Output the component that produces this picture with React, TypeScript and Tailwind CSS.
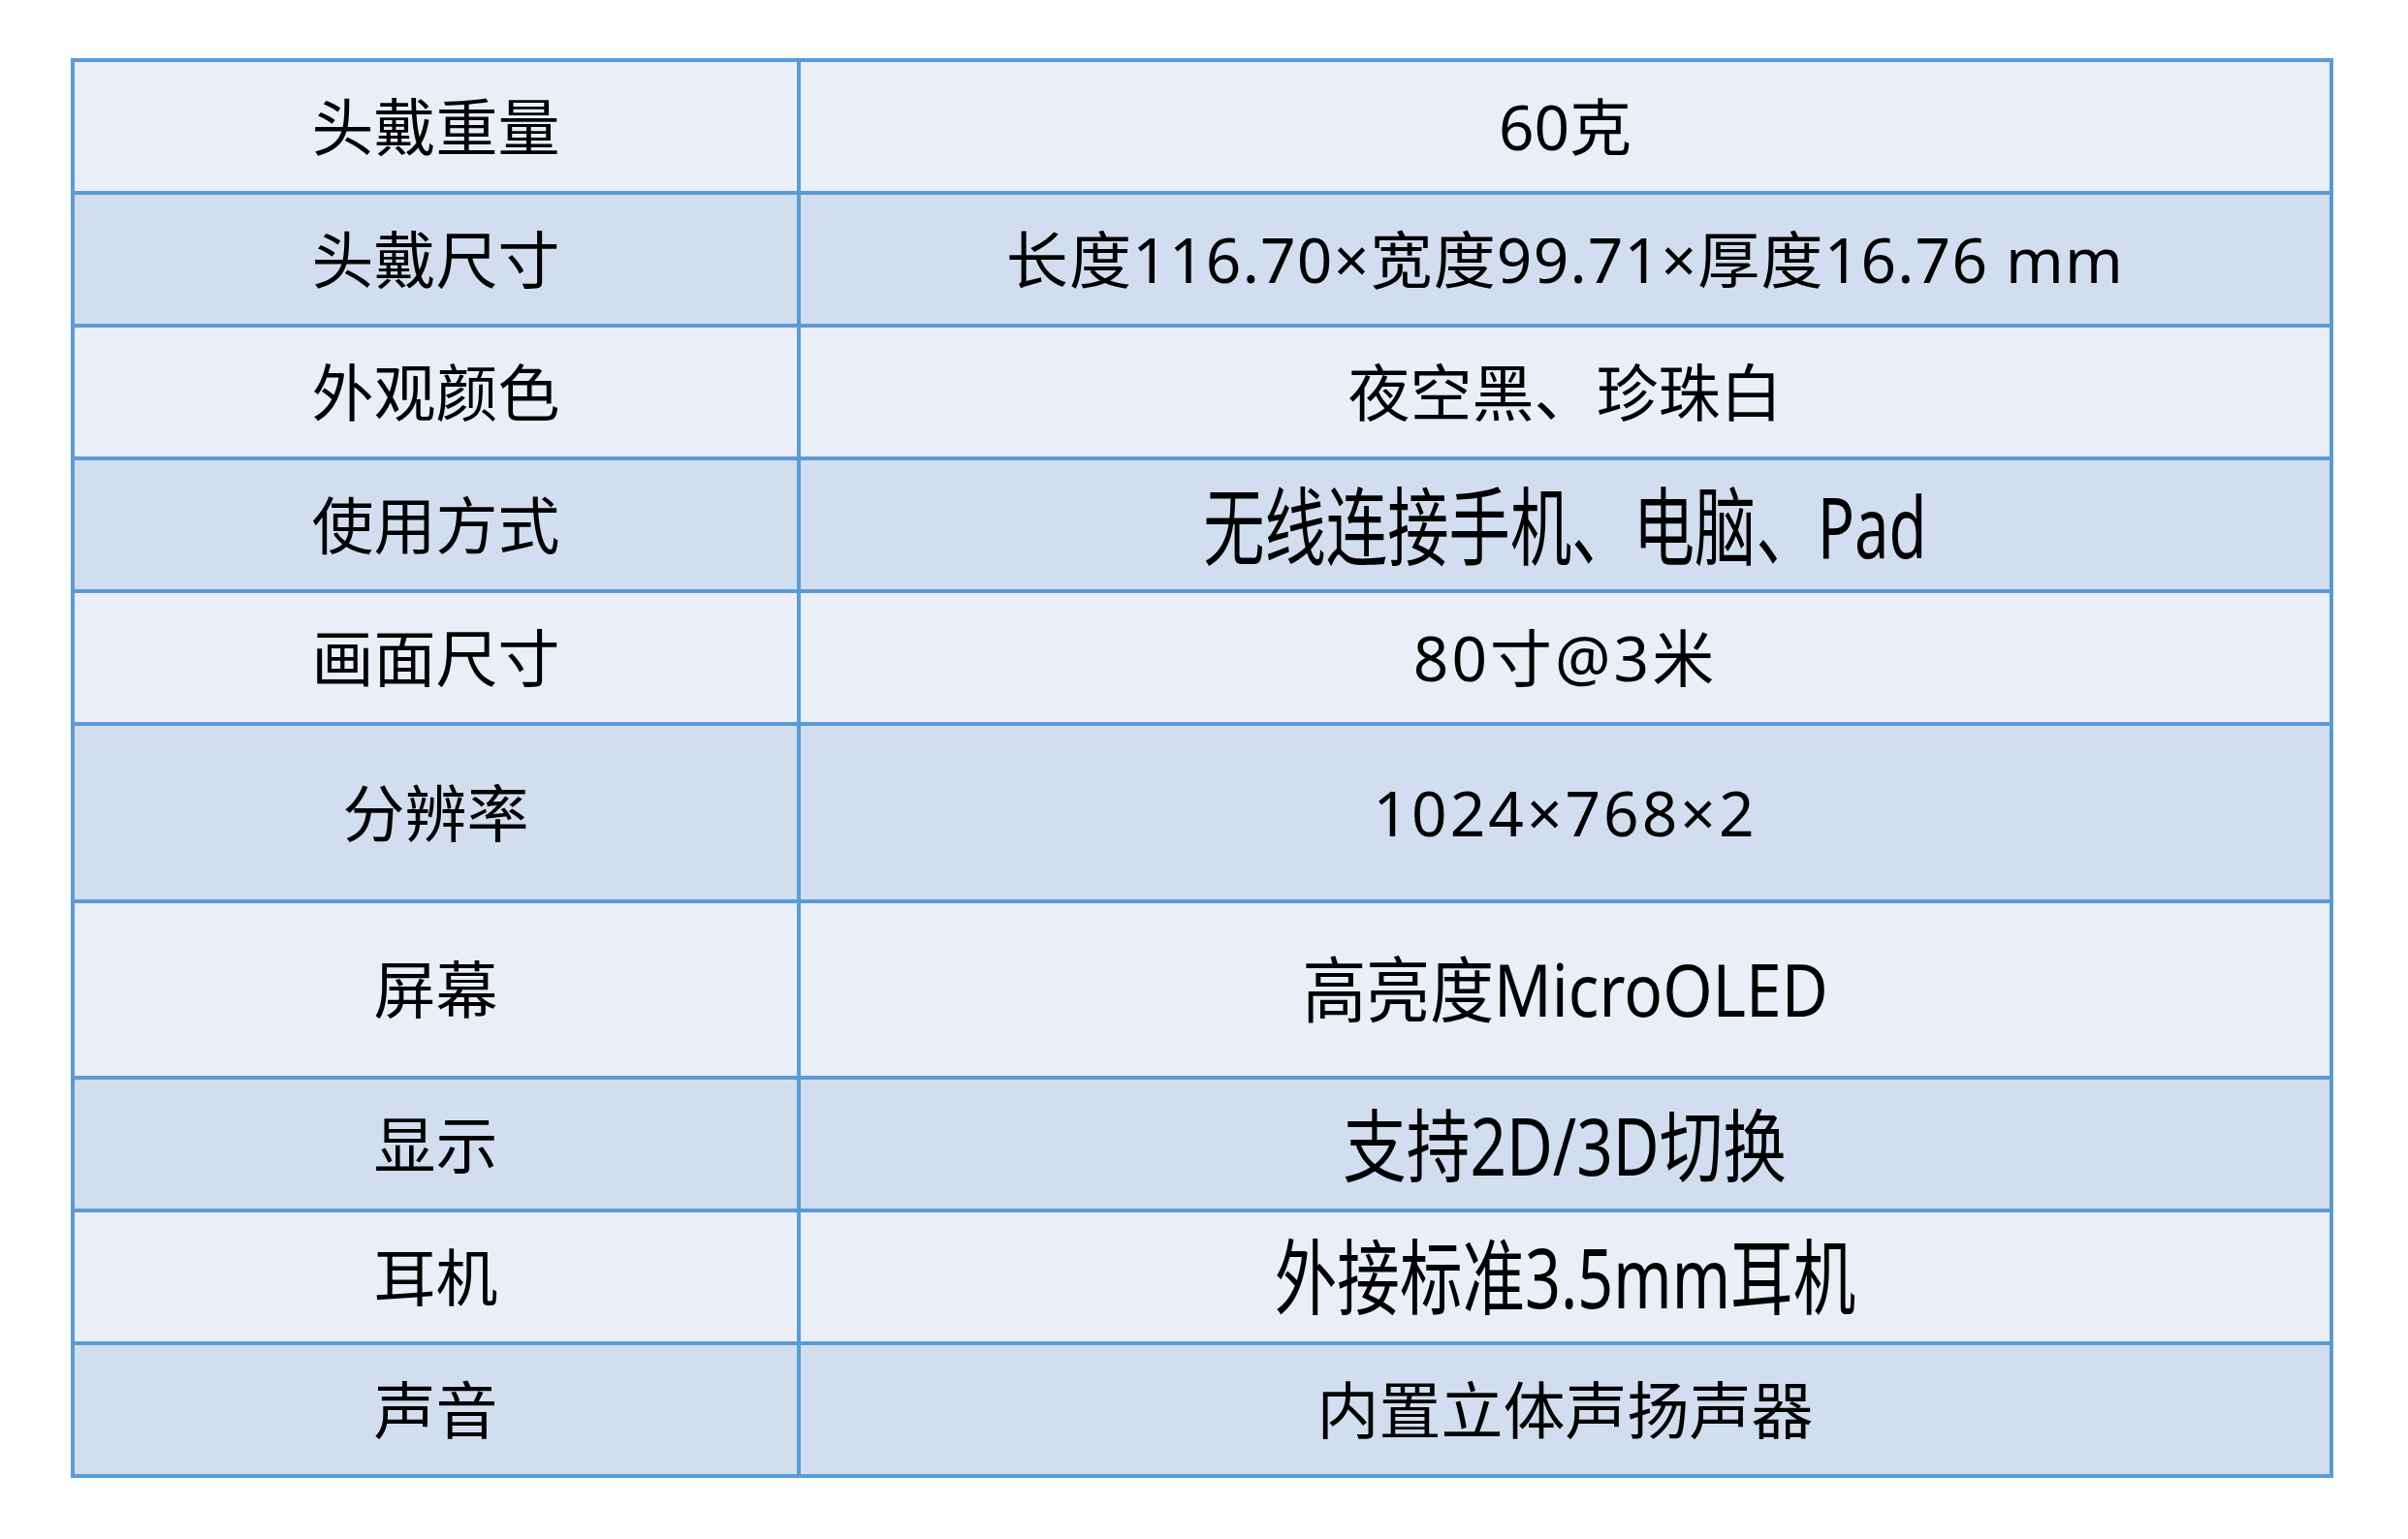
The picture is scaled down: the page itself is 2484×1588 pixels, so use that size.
type Spec = {
  label: string;
  value: string;
  tall?: boolean;
  // some value cells in the source are set in a taller, squeezed face
  valueClass?: string;
};

const specs: Spec[] = [
  { label: "头戴重量", value: "60克" },
  {
    label: "头戴尺寸",
    value: "长度116.70×宽度99.71×厚度16.76 mm",
    valueClass: "text-[64px] tracking-[1.2px]",
  },
  { label: "外观颜色", value: "夜空黑、珍珠白" },
  {
    label: "使用方式",
    value: "无线连接手机、电脑、Pad",
    valueClass: "text-[88px] scale-x-[0.72]",
  },
  {
    label: "画面尺寸",
    value: "80寸@3米",
    valueClass: "text-[64px] tracking-[3px]",
  },
  {
    label: "分辨率",
    value: "1024×768×2",
    tall: true,
    valueClass: "text-[64px] tracking-[3px]",
  },
  {
    label: "屏幕",
    value: "高亮度MicroOLED",
    tall: true,
    valueClass: "text-[74px] scale-x-[0.89]",
  },
  {
    label: "显示",
    value: "支持2D/3D切换",
    valueClass: "text-[82px] scale-x-[0.8]",
  },
  {
    label: "耳机",
    value: "外接标准3.5mm耳机",
    valueClass: "text-[85px] scale-x-[0.76]",
  },
  { label: "声音", value: "内置立体声扬声器" },
];

export default function App() {
  return (
    <div
      className="min-h-[1588px] w-full bg-white pl-[73px] pt-[60px] text-black"
      style={{ fontFamily: '"Noto Sans", "Noto Sans CJK SC", sans-serif' }}
    >
      <div className="grid w-[2334px] grid-cols-[745px_1577px] gap-[4px] bg-[#5b9bd5] p-[4px]">
        {specs.map((row, i) => {
          const bg = i % 2 === 0 ? "bg-[#e9eef7]" : "bg-[#d2deef]";
          const h = row.tall ? (i === 5 ? "h-[179px]" : "h-[178px]") : "h-[133px]";
          return (
            <div key={row.label} className="contents">
              <div className={`flex items-center justify-center ${h} ${bg}`}>
                <span className="text-[64px] leading-none">{row.label}</span>
              </div>
              <div className={`flex items-center justify-center overflow-hidden ${h} ${bg}`}>
                <span
                  className={`inline-block whitespace-nowrap leading-none ${
                    row.valueClass ?? "text-[64px]"
                  }`}
                >
                  {row.value}
                </span>
              </div>
            </div>
          );
        })}
      </div>
    </div>
  );
}
